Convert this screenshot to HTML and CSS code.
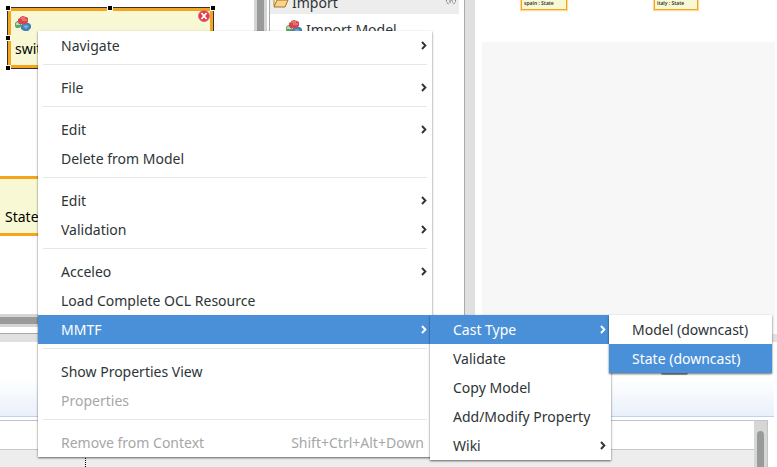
FILE: index.html
```html
<!DOCTYPE html>
<html lang="en">
<head>
<meta charset="utf-8">
<title>Model editor</title>
<link rel="stylesheet" href="styles.css">
</head>
<body>
<svg class="defs" aria-hidden="true">
  <symbol id="model" viewBox="0 0 16 15">
    <path d="M0 7l2-2h4v6l-2 1H1L0 10z" fill="#5fa56c"/>
    <path d="M1 7l2-1 2 1v2H1z" fill="#b4dfb8"/>
    <path d="M6 9l5-2h3l2 2v3l-3 3H9l-3-2z" fill="#4580b8"/>
    <path d="M8 10l3-1 3 1-3 3z" fill="#78addb"/>
    <path d="M3 3l2-1V1l3-1 3 1 2 1v4l-2 2H9L8 9 6 8H4L3 6z" fill="#d2484c"/>
    <path d="M6 1h4v2h2v2H7V3H5z" fill="#ec7072"/>
  </symbol>
  <symbol id="arrow" viewBox="0 0 6 9">
    <path d="M1 1l3.4 3.5L1 8" fill="none" stroke="currentColor" stroke-width="1.9"/>
  </symbol>
</svg>
<div class="workspace">
  <main class="upper">
    <section class="editor">
      <div class="canvas">
        <div class="node selected">
          <svg class="model-icon"><use href="#model"/></svg>
          <svg class="error" viewBox="0 0 12 12"><circle cx="6" cy="6" r="5.5" fill="#e03a4b" stroke="#d9737c"/><path d="M3.5 3l5 6M8.5 3l-5 6" stroke="#fff" stroke-width="1.8"/></svg>
          <span class="node-name">switch</span>
          <i class="handle nw"></i><i class="handle n"></i><i class="handle ne"></i><i class="handle w"></i><i class="handle sw"></i>
        </div>
        <div class="node state"><span>State</span></div>
      </div>
      <div class="bar-vertical"></div>
      <div class="bar-horizontal"></div>
    </section>
    <aside class="palette">
      <div class="palette-head">
        <svg class="folder" viewBox="0 0 16 14"><path d="M1 12V2h5l1 2h6v3" fill="#fff3cc" stroke="#b98232"/><path d="M1 13l3-7h11l-3 7z" fill="#f8d58a" stroke="#a97221"/></svg>
        <span>Import</span>
        <svg class="pin" viewBox="0 0 12 8"><path d="M4 0L1 3l3 4M8 0l3 3-3 4M4 4h4M5 1v2M7 1v2" fill="none" stroke="#777" stroke-dasharray="2 1"/></svg>
      </div>
      <div class="palette-item"><svg class="model-icon"><use href="#model"/></svg><span>Import Model</span></div>
    </aside>
    <section class="outline">
      <div class="thumbs"><span class="thumb spain">spain : State</span><span class="thumb italy">italy : State</span></div>
      <div class="viewport"></div>
    </section>
  </main>
  <section class="lower">
    <div class="tabs"><i class="grip"></i></div>
    <div class="table-area">
      <div class="table-body"><div class="row"></div><div class="columns"></div></div>
      <div class="table-scroll"><i></i></div>
    </div>
  </section>
</div>
<ul class="menu context" role="menu">
  <li><button>Navigate<svg><use href="#arrow"/></svg></button></li>
  <li class="rule"></li>
  <li><button>File<svg><use href="#arrow"/></svg></button></li>
  <li class="rule"></li>
  <li><button>Edit<svg><use href="#arrow"/></svg></button></li>
  <li><button>Delete from Model</button></li>
  <li class="rule"></li>
  <li><button>Edit<svg><use href="#arrow"/></svg></button></li>
  <li><button>Validation<svg><use href="#arrow"/></svg></button></li>
  <li class="rule"></li>
  <li><button>Acceleo<svg><use href="#arrow"/></svg></button></li>
  <li><button>Load Complete OCL Resource</button></li>
  <li><button class="active">MMTF<svg><use href="#arrow"/></svg></button>
    <ul class="menu mmtf" role="menu">
      <li><button class="active">Cast Type<svg><use href="#arrow"/></svg></button>
        <ul class="menu cast" role="menu">
          <li><button>Model (downcast)</button></li>
          <li><button class="active">State (downcast)</button></li>
        </ul>
      </li>
      <li><button>Validate</button></li>
      <li><button>Copy Model</button></li>
      <li><button>Add/Modify Property</button></li>
      <li><button>Wiki<svg><use href="#arrow"/></svg></button></li>
    </ul>
  </li>
  <li class="rule"></li>
  <li><button>Show Properties View</button></li>
  <li><button disabled>Properties</button></li>
  <li class="rule"></li>
  <li><button disabled>Remove from Context<kbd>Shift+Ctrl+Alt+Down</kbd></button></li>
</ul>
</body>
</html>
```
FILE: styles.css
```css
* { box-sizing: border-box; }
body {
  margin: 0;
  overflow: hidden;
  color: #2e3436;
  background: #fff;
  font: 14px/20px "Noto Sans", sans-serif;
}
.defs { position: absolute; width: 0; height: 0; }
.workspace {
  display: grid;
  grid-template-rows: 342px 1fr;
  height: 100vh;
}
.upper {
  display: grid;
  grid-template-columns: 269px 196px 1fr;
  border-bottom: 8px solid #e0e0e0;
}
.editor {
  display: grid;
  grid-template-columns: 1fr 13px;
  grid-template-rows: 1fr 13px;
  padding: 0 2px 6px 0;
  border-bottom: 1px solid #aaa;
}
.canvas { position: relative; }
.bar-vertical {
  background: #999b9b;
  border: solid #d5d5d5;
  border-width: 0 3px;
}
.bar-horizontal {
  background: #999b9b;
  border: solid #d5d5d5;
  border-width: 3px 0;
}
.node {
  position: absolute;
  color: #000;
  background: #f8f8d4;
  border: 3px solid #f5a51d;
}
.selected {
  left: 8px;
  top: 8px;
  width: 205px;
  height: 60px;
  outline: 1px solid #333;
}
.model-icon { width: 16px; height: 15px; }
.selected .model-icon { position: absolute; left: 4px; top: 5px; }
.error {
  position: absolute;
  right: 0;
  top: -1px;
  width: 12px;
  height: 12px;
}
.node-name { position: absolute; left: 4px; top: 28px; }
.handle {
  position: absolute;
  width: 6px;
  height: 6px;
  background: #000;
  border: 1px solid #fff;
}
.handle.nw { left: -6px; top: -6px; }
.handle.n { left: 96px; top: -6px; }
.handle.ne { right: -6px; top: -6px; }
.handle.w { left: -6px; top: 24px; }
.handle.sw { left: -6px; bottom: -6px; }
.state {
  left: -3px;
  top: 176px;
  width: 100px;
  height: 60px;
  padding: 28px 5px 0;
}
.palette {
  border: solid #aaa;
  border-width: 0 1px 1px;
  overflow: hidden;
}
.palette-head {
  display: flex;
  align-items: flex-end;
  gap: 3px;
  height: 14px;
  margin-right: 5px;
  padding-left: 3px;
  background: #ededed;
}
.palette-head span { flex: 1; line-height: 22px; }
.folder { width: 16px; height: 14px; margin-bottom: 6px; }
.pin { width: 12px; height: 8px; margin: 0 2px 8px 0; }
.palette-item {
  display: flex;
  gap: 4px;
  padding: 6px 0 0 16px;
}
.outline {
  border-left: 10px solid #e0e0e0;
  padding: 0 2px 0 7px;
}
.thumbs {
  display: flex;
  gap: 87px;
  height: 42px;
  padding-left: 39px;
}
.thumb {
  height: 10px;
  color: #333;
  background: #f8f8d4;
  border: 1px solid #f5a51d;
  border-top: 0;
  box-shadow: 0 0 1px 1px #f5a51d66;
  font-size: 5px;
  font-weight: 600;
  line-height: 6px;
  padding-left: 2px;
}
.spain { width: 46px; }
.italy { width: 44px; }
.viewport { height: 292px; background: #f7f7f7; }
.lower { display: grid; grid-template-rows: 78px 1fr; }
.tabs {
  height: 75px;
  margin-right: 3px;
  padding: 29px 0 0 661px;
  background: linear-gradient(#fff 50%, #e9f0fb);
  border-bottom: 1px solid #bcd4ef;
}
.grip {
  display: block;
  width: 27px;
  height: 4px;
  background: #a0a0a0;
  border-radius: 2px;
}
.table-area {
  display: grid;
  grid-template-columns: 1fr 13px;
  margin-right: 9px;
  border: solid #c4c4c4;
  border-width: 1px 1px 0 0;
}
.table-body {
  display: grid;
  grid-template-rows: 29px 1fr;
  background: #ededed;
}
.row { background: #fff; border-bottom: 1px solid #c8c8c8; }
.columns { width: 86px; border-right: 1px dotted #000; }
.table-scroll { padding: 10px 3px 0; background: #d6d6d6; }
.table-scroll i {
  display: block;
  height: 100%;
  background: #999b9b;
  border-radius: 4px 4px 0 0;
}
.menu {
  position: absolute;
  margin: 0;
  padding: 0;
  list-style: none;
  background: #fff;
  box-shadow: 0 1px 2px #0009;
}
.context { left: 38px; top: 31px; width: 394px; }
.mmtf { left: 392px; top: 0; width: 181px; }
.cast { left: 179px; top: 0; width: 163px; }
.menu li { position: relative; }
.menu .rule {
  height: 1px;
  margin: 4px 5px 8px;
  background: #e6e6e6;
}
.menu button {
  display: flex;
  align-items: center;
  justify-content: space-between;
  width: 100%;
  height: 29px;
  padding: 1px 8px 0 23px;
  color: #2e3436;
  background: none;
  border: 0;
  font: inherit;
  text-align: left;
  white-space: nowrap;
}
.mmtf button { padding-right: 5px; }
.menu .active { color: #fff; background: #4a90d9; }
.menu button:disabled { color: #a5a7a8; }
.menu button svg { width: 6px; height: 9px; margin: 0 -3px 1px 0; }
.mmtf button svg { margin-right: 0; }
kbd { font: inherit; }
```
